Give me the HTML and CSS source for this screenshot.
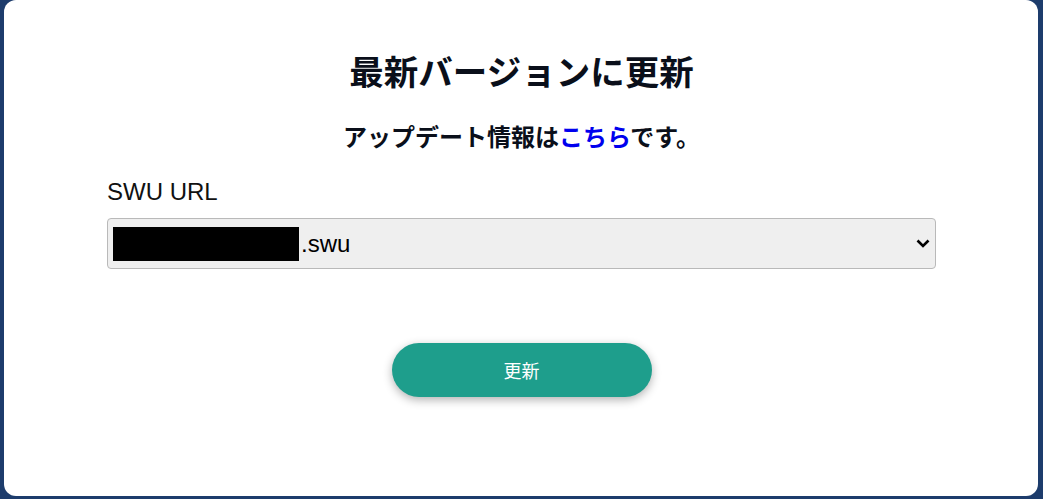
FILE: index.html
```html
<!DOCTYPE html>
<html lang="ja">
<head>
<meta charset="utf-8">
<title>最新バージョンに更新</title>
<link rel="stylesheet" href="styles.css">
</head>
<body>
<main class="card">
  <h1 class="title">最新バージョンに更新</h1>
  <p class="subtitle">アップデート情報は<a href="#" class="link">こちら</a>です。</p>
  <div class="field">
    <label class="label">SWU URL</label>
    <div class="select">
      <span class="value"><span class="redacted"></span>.swu</span>
      <svg class="chevron" width="14" height="9" viewBox="0 0 14 9"><path d="M1.5 1.5 L7 7 L12.5 1.5" fill="none" stroke="#000" stroke-width="2.6"/></svg>
    </div>
  </div>
  <div class="actions">
    <button class="btn">更新</button>
  </div>
</main>
</body>
</html>
```
FILE: styles.css
```css
html, body {
  margin: 0;
  height: 100%;
}
body {
  background: #1d3c6c;
  padding: 0 5px 3px 4px;
  box-sizing: border-box;
  font-family: "Liberation Sans", "Noto Sans CJK JP", sans-serif;
}
.card {
  background: #fff;
  height: 496px;
  border-radius: 12px;
  box-sizing: border-box;
  padding: 50px 102px 0 103px;
}
.title {
  margin: 0;
  text-align: center;
  font-family: "Noto Sans CJK JP", sans-serif;
  font-weight: 700;
  font-size: 34.5px;
  line-height: 40px;
  color: #0a0f1a;
}
.subtitle {
  margin: 31px 0 0;
  text-align: center;
  font-family: "Noto Sans CJK JP", sans-serif;
  font-weight: 700;
  font-size: 24px;
  line-height: 30px;
  color: #0a0f1a;
}
.link {
  color: #0000ee;
  text-decoration: none;
}
.field {
  margin-top: 27px;
  display: flex;
  flex-direction: column;
}
.label {
  font-size: 24px;
  line-height: 28px;
  color: #111;
}
.select {
  margin-top: 12px;
  height: 51px;
  box-sizing: border-box;
  background: #efefef;
  border: 1px solid #b9b9b9;
  border-radius: 4px;
  display: flex;
  align-items: center;
  justify-content: space-between;
  padding: 0 5px 0 5px;
}
.value {
  display: flex;
  align-items: center;
  font-size: 24px;
  color: #000;
}
.redacted {
  display: inline-block;
  width: 186px;
  height: 34px;
  background: #000;
  margin-right: 2px;
}
.chevron {
  display: block;
  margin-right: 0;
}
.actions {
  display: flex;
  justify-content: center;
  margin-top: 74px;
}
.btn {
  width: 260px;
  height: 54px;
  border: none;
  border-radius: 27px;
  background: #1e9e8c;
  color: #fff;
  font-family: "Noto Sans CJK JP", sans-serif;
  font-size: 18px;
  box-shadow: 0 3px 10px rgba(0, 0, 0, 0.3);
  cursor: pointer;
}
```
